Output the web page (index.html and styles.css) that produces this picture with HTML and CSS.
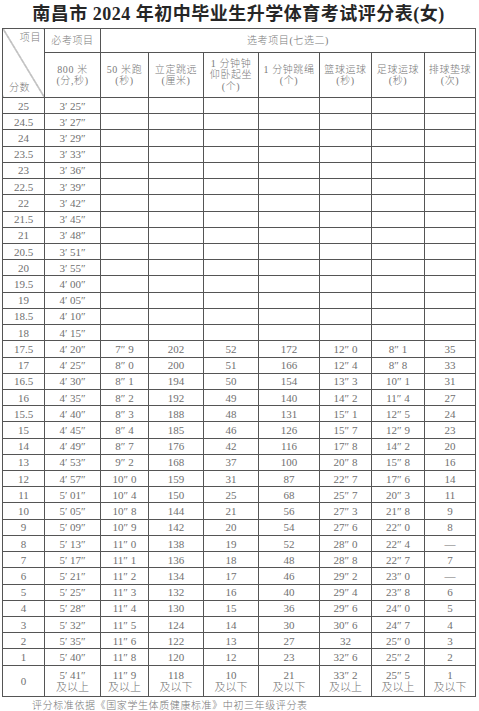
FILE: index.html
```html
<!DOCTYPE html>
<html lang="zh-CN">
<head>
<meta charset="utf-8">
<title>南昌市2024年初中毕业生升学体育考试评分表(女)</title>
<link rel="stylesheet" href="styles.css">
</head>
<body>
<div class="page">
  <h1 class="title">南昌市 <span class="num">2024</span> 年初中毕业生升学体育考试评分表(女)</h1>
  <table class="score">
    <colgroup>
      <col class="c1"><col class="c2"><col class="c3"><col class="c4"><col class="c5"><col class="c6"><col class="c7"><col class="c8"><col class="c9">
    </colgroup>
    <thead>
      <tr class="h1">
        <th rowspan="2" class="diag"><span class="d-top">项目</span><span class="d-bot">分数</span></th>
        <th>必考项目</th>
        <th colspan="7">选考项目(七选二)</th>
      </tr>
      <tr class="h2">
        <th>800 米<br>(分,秒)</th>
        <th>50 米跑<br>(秒)</th>
        <th>立定跳远<br>(厘米)</th>
        <th>1 分钟钟<br>仰卧起坐<br>(个)</th>
        <th>1 分钟跳绳<br>(个)</th>
        <th>篮球运球<br>(秒)</th>
        <th>足球运球<br>(秒)</th>
        <th>排球垫球<br>(次)</th>
      </tr>
    </thead>
    <tbody>
      <tr><td>25</td><td>3′ 25″</td><td></td><td></td><td></td><td></td><td></td><td></td><td></td></tr>
      <tr><td>24.5</td><td>3′ 27″</td><td></td><td></td><td></td><td></td><td></td><td></td><td></td></tr>
      <tr><td>24</td><td>3′ 29″</td><td></td><td></td><td></td><td></td><td></td><td></td><td></td></tr>
      <tr><td>23.5</td><td>3′ 33″</td><td></td><td></td><td></td><td></td><td></td><td></td><td></td></tr>
      <tr><td>23</td><td>3′ 36″</td><td></td><td></td><td></td><td></td><td></td><td></td><td></td></tr>
      <tr><td>22.5</td><td>3′ 39″</td><td></td><td></td><td></td><td></td><td></td><td></td><td></td></tr>
      <tr><td>22</td><td>3′ 42″</td><td></td><td></td><td></td><td></td><td></td><td></td><td></td></tr>
      <tr><td>21.5</td><td>3′ 45″</td><td></td><td></td><td></td><td></td><td></td><td></td><td></td></tr>
      <tr><td>21</td><td>3′ 48″</td><td></td><td></td><td></td><td></td><td></td><td></td><td></td></tr>
      <tr><td>20.5</td><td>3′ 51″</td><td></td><td></td><td></td><td></td><td></td><td></td><td></td></tr>
      <tr><td>20</td><td>3′ 55″</td><td></td><td></td><td></td><td></td><td></td><td></td><td></td></tr>
      <tr><td>19.5</td><td>4′ 00″</td><td></td><td></td><td></td><td></td><td></td><td></td><td></td></tr>
      <tr><td>19</td><td>4′ 05″</td><td></td><td></td><td></td><td></td><td></td><td></td><td></td></tr>
      <tr><td>18.5</td><td>4′ 10″</td><td></td><td></td><td></td><td></td><td></td><td></td><td></td></tr>
      <tr><td>18</td><td>4′ 15″</td><td></td><td></td><td></td><td></td><td></td><td></td><td></td></tr>
      <tr><td>17.5</td><td>4′ 20″</td><td>7″ 9</td><td>202</td><td>52</td><td>172</td><td>12″ 0</td><td>8″ 1</td><td>35</td></tr>
      <tr><td>17</td><td>4′ 25″</td><td>8″ 0</td><td>200</td><td>51</td><td>166</td><td>12″ 4</td><td>8″ 8</td><td>33</td></tr>
      <tr><td>16.5</td><td>4′ 30″</td><td>8″ 1</td><td>194</td><td>50</td><td>154</td><td>13″ 3</td><td>10″ 1</td><td>31</td></tr>
      <tr><td>16</td><td>4′ 35″</td><td>8″ 2</td><td>192</td><td>49</td><td>140</td><td>14″ 2</td><td>11″ 4</td><td>27</td></tr>
      <tr><td>15.5</td><td>4′ 40″</td><td>8″ 3</td><td>188</td><td>48</td><td>131</td><td>15″ 1</td><td>12″ 5</td><td>24</td></tr>
      <tr><td>15</td><td>4′ 45″</td><td>8″ 4</td><td>185</td><td>46</td><td>126</td><td>15″ 7</td><td>12″ 9</td><td>23</td></tr>
      <tr><td>14</td><td>4′ 49″</td><td>8″ 7</td><td>176</td><td>42</td><td>116</td><td>17″ 8</td><td>14″ 2</td><td>20</td></tr>
      <tr><td>13</td><td>4′ 53″</td><td>9″ 2</td><td>168</td><td>37</td><td>100</td><td>20″ 8</td><td>15″ 8</td><td>16</td></tr>
      <tr><td>12</td><td>4′ 57″</td><td>10″ 0</td><td>159</td><td>31</td><td>87</td><td>22″ 7</td><td>17″ 6</td><td>14</td></tr>
      <tr><td>11</td><td>5′ 01″</td><td>10″ 4</td><td>150</td><td>25</td><td>68</td><td>25″ 7</td><td>20″ 3</td><td>11</td></tr>
      <tr><td>10</td><td>5′ 05″</td><td>10″ 8</td><td>144</td><td>21</td><td>56</td><td>27″ 3</td><td>21″ 8</td><td>9</td></tr>
      <tr><td>9</td><td>5′ 09″</td><td>10″ 9</td><td>142</td><td>20</td><td>54</td><td>27″ 6</td><td>22″ 0</td><td>8</td></tr>
      <tr><td>8</td><td>5′ 13″</td><td>11″ 0</td><td>138</td><td>19</td><td>52</td><td>28″ 0</td><td>22″ 4</td><td>—</td></tr>
      <tr><td>7</td><td>5′ 17″</td><td>11″ 1</td><td>136</td><td>18</td><td>48</td><td>28″ 8</td><td>22″ 7</td><td>7</td></tr>
      <tr><td>6</td><td>5′ 21″</td><td>11″ 2</td><td>134</td><td>17</td><td>46</td><td>29″ 2</td><td>23″ 0</td><td>—</td></tr>
      <tr><td>5</td><td>5′ 25″</td><td>11″ 3</td><td>132</td><td>16</td><td>40</td><td>29″ 4</td><td>23″ 8</td><td>6</td></tr>
      <tr><td>4</td><td>5′ 28″</td><td>11″ 4</td><td>130</td><td>15</td><td>36</td><td>29″ 6</td><td>24″ 0</td><td>5</td></tr>
      <tr><td>3</td><td>5′ 32″</td><td>11″ 5</td><td>124</td><td>14</td><td>30</td><td>30″ 6</td><td>24″ 7</td><td>4</td></tr>
      <tr><td>2</td><td>5′ 35″</td><td>11″ 6</td><td>122</td><td>13</td><td>27</td><td>32</td><td>25″ 0</td><td>3</td></tr>
      <tr><td>1</td><td>5′ 40″</td><td>11″ 8</td><td>120</td><td>12</td><td>23</td><td>32″ 6</td><td>25″ 2</td><td>2</td></tr>
      <tr class="last"><td>0</td><td>5′ 41″<br>及以上</td><td>11″ 9<br>及以上</td><td>118<br>及以下</td><td>10<br>及以下</td><td>21<br>及以下</td><td>33″ 2<br>及以上</td><td>25″ 5<br>及以上</td><td>1<br>及以下</td></tr>
    </tbody>
  </table>
  <p class="note">评分标准依据《国家学生体质健康标准》中初三年级评分表</p>
</div>
</body>
</html>
```
FILE: styles.css
```css
html, body {
  margin: 0;
  padding: 0;
  background: #ffffff;
}

.page {
  width: 479px;
  padding: 0 4px 0 2px;
  box-sizing: border-box;
}

.title {
  margin: 0;
  height: 28px;
  line-height: 28px;
  text-align: center;
  font-family: "Liberation Serif", "Noto Sans CJK SC", serif;
  font-size: 18px;
  font-weight: 700;
  letter-spacing: 0.5px;
  color: #262626;
  white-space: nowrap;
}

.title .num {
  font-family: "Liberation Serif", serif;
  font-size: 18px;
}

.score {
  width: 473px;
  border-collapse: collapse;
  table-layout: fixed;
  font-family: "Liberation Serif", "Noto Sans CJK SC", serif;
  color: #707070;
}

.c1 { width: 42px; }
.c2 { width: 56px; }
.c3 { width: 48px; }
.c4 { width: 55px; }
.c5 { width: 55px; }
.c6 { width: 61px; }
.c7 { width: 52px; }
.c8 { width: 53px; }
.c9 { width: 51px; }

.score th,
.score td {
  border: 1px solid #555555;
  padding: 0;
  text-align: center;
  vertical-align: middle;
  white-space: nowrap;
}

.score th {
  font-weight: 300;
  font-size: 10px;
  line-height: 12px;
  letter-spacing: 0.6px;
  color: #7a7a7a;
}

.h1 { height: 24px; }
.h2 { height: 45px; }

.h2 th {
  font-size: 10px;
  line-height: 11.5px;
}

.diag {
  position: relative;
  background: linear-gradient(to top right, transparent calc(50% - 0.6px), #555555 50%, transparent calc(50% + 0.6px));
}

.d-top {
  position: absolute;
  top: 3px;
  right: 3px;
}

.d-bot {
  position: absolute;
  bottom: 3px;
  left: 6px;
}

.score tbody tr { height: 16.23px; }

.score td {
  font-size: 11px;
  line-height: 12px;
  font-weight: 300;
}

.score tr.last { height: 31px; }

.score tr.last td {
  line-height: 12px;
}

.note {
  margin: 2px 0 0 30px;
  font-family: "Noto Sans CJK SC", sans-serif;
  font-weight: 300;
  font-size: 10px;
  line-height: 12px;
  letter-spacing: 0.6px;
  color: #777777;
  white-space: nowrap;
}
```
